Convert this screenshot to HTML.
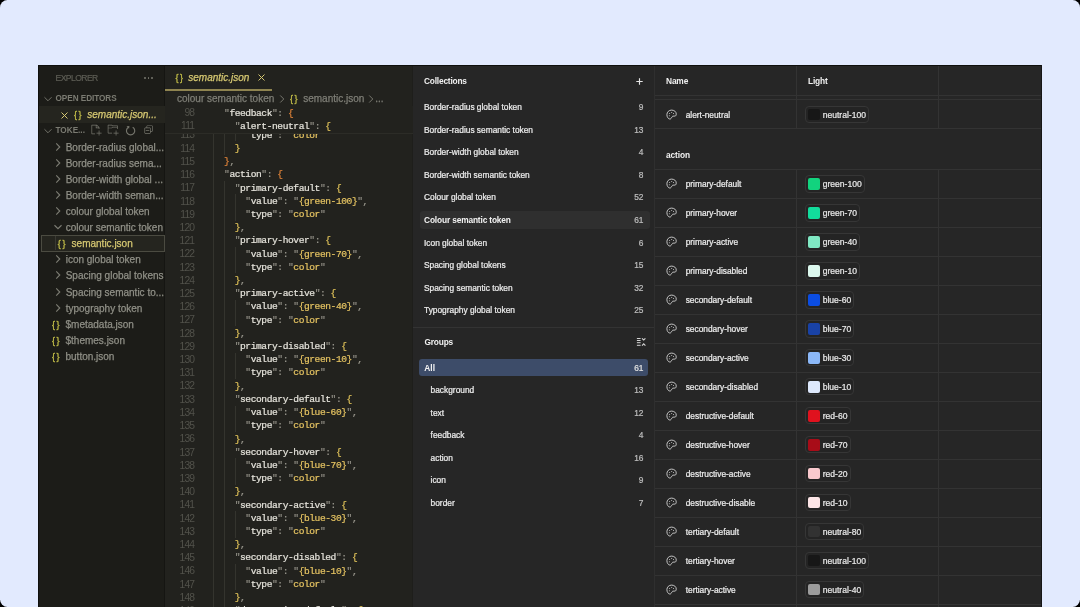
<!DOCTYPE html>
<html><head><meta charset="utf-8"><style>
html,body{margin:0;padding:0;}
body{width:1080px;height:607px;overflow:hidden;position:relative;background:#000;font-family:"Liberation Sans",sans-serif;}
.bgwrap{position:absolute;left:0;top:0;width:1080px;height:607px;background:#e2eafe;border-radius:7.5px;overflow:hidden;will-change:transform;}
.t{position:absolute;white-space:pre;}
.r{position:absolute;}
.m{font-family:"Liberation Mono",monospace;}
svg{position:absolute;overflow:visible;}
</style></head><body><div class="bgwrap">

<div class="r" style="left:38.00px;top:65.00px;width:127.00px;height:542.00px;background:#1c1c18;"></div>
<div class="r" style="left:165.00px;top:65.00px;width:248.00px;height:542.00px;background:#22221e;"></div>
<div class="r" style="left:413.00px;top:65.00px;width:241.00px;height:542.00px;background:#262626;"></div>
<div class="r" style="left:654.00px;top:65.00px;width:388.00px;height:542.00px;background:#262626;"></div>
<div class="r" style="left:164.00px;top:65.00px;width:1.00px;height:542.00px;background:#151512;"></div>
<div class="r" style="left:412.00px;top:65.00px;width:1.00px;height:542.00px;background:#1e1e1b;"></div>
<div class="t" style="left:55.50px;top:71.20px;line-height:14px;font-size:8.6px;color:#5d5d55;font-weight:normal;font-style:normal;letter-spacing:-0.58px;-webkit-text-stroke:0.2px currentColor;">EXPLORER</div>
<div class="r" style="left:144.20px;top:77.20px;width:1.50px;height:1.50px;background:#77776e;border-radius:1px;"></div>
<div class="r" style="left:147.70px;top:77.20px;width:1.50px;height:1.50px;background:#77776e;border-radius:1px;"></div>
<div class="r" style="left:151.20px;top:77.20px;width:1.50px;height:1.50px;background:#77776e;border-radius:1px;"></div>
<svg style="left:44px;top:95.2px" width="8" height="8" viewBox="0 0 10 10"><path d="M0.6 2.8 L5 7.2 L9.4 2.8" fill="none" stroke="#7b7b72" stroke-width="1.12"/></svg>
<div class="t" style="left:55.50px;top:92.00px;line-height:14px;font-size:8.2px;color:#7b7b72;font-weight:bold;font-style:normal;letter-spacing:-0.05px;">OPEN EDITORS</div>
<div class="r" style="left:38.00px;top:106.30px;width:127.00px;height:16.30px;background:#25251f;"></div>
<svg style="left:61px;top:111.5px" width="7" height="7" viewBox="0 0 7 7"><path d="M0.5 0.5 L6.5 6.5 M6.5 0.5 L0.5 6.5" stroke="#d6c872" stroke-width="1"/></svg>
<div class="t" style="left:74px;top:107.7px;line-height:14px;font-size:9px;color:#c3be48;font-weight:normal;letter-spacing:1.6px;-webkit-text-stroke:0.3px #c3be48">{}</div>
<div class="t" style="left:87.30px;top:107.70px;line-height:14px;font-size:10px;color:#d6c872;font-weight:normal;font-style:italic;letter-spacing:0px;-webkit-text-stroke:0.25px currentColor;">semantic.json...</div>
<svg style="left:44px;top:127.30000000000001px" width="8" height="8" viewBox="0 0 10 10"><path d="M0.6 2.8 L5 7.2 L9.4 2.8" fill="none" stroke="#7b7b72" stroke-width="1.12"/></svg>
<div class="t" style="left:55.50px;top:124.10px;line-height:14px;font-size:8.2px;color:#7b7b72;font-weight:bold;font-style:normal;letter-spacing:0px;">TOKE...</div>
<svg style="left:90px;top:124.2px" width="11.6" height="11.6" viewBox="0 0 16 16"><path d="M9.5 1.1l3.4 3.5.1.4v2h-1V6H8V2H3v11h4v1H2.5l-.5-.5v-12l.5-.5h6.7l.3.1zM9 2v3h2.9L9 2zm4 14h-1v-3H9v-1h3V9h1v3h3v1h-3v3z" fill="#75756c"/></svg>
<svg style="left:107px;top:124.2px" width="11.6" height="11.6" viewBox="0 0 16 16"><path d="M14.5 2H7.71l-.85-.85L6.51 1h-5l-.5.5v11l.5.5H7v-1H1.99V6h4.49l.35-.15.86-.86H14v1.5l-.001.51h1.011V2.5L14.5 2zm-.51 2h-6.5l-.35.15-.86.86H2v-3h4.29l.85.85.36.15H14l-.01.99zM13 16h-1v-3H9v-1h3V9h1v3h3v1h-3v3z" fill="#75756c"/></svg>
<svg style="left:122px;top:122px" width="18" height="18" viewBox="0 0 18 18"><path d="M10.68 5.16 A4.15 4.15 0 1 1 6.52 5.16" fill="none" stroke="#75756c" stroke-width="1.15"/><path d="M4.5 4.3 L7.4 3.9 L7.1 6.7 Z" fill="#75756c"/></svg>
<svg style="left:143px;top:124.2px" width="11.2" height="11.2" viewBox="0 0 16 16"><path d="M9 9H4v1h5V9z M5 3l1-1h7l1 1v7l-1 1h-2v2l-1 1H3l-1-1V6l1-1h2V3zm1 2h4l1 1v4h2V3H6v2zm4 1H3v7h7V6z" fill="#75756c"/></svg>
<svg style="left:53.5px;top:142.9px" width="8" height="8" viewBox="0 0 10 10"><path d="M2.8 0.6 L7.2 5 L2.8 9.4" fill="none" stroke="#7d7d74" stroke-width="1.38"/></svg>
<div class="t" style="left:65.70px;top:140.90px;line-height:14px;font-size:10px;color:#909087;font-weight:normal;font-style:normal;letter-spacing:0px;-webkit-text-stroke:0.25px currentColor;">Border-radius global...</div>
<svg style="left:53.5px;top:158.97px" width="8" height="8" viewBox="0 0 10 10"><path d="M2.8 0.6 L7.2 5 L2.8 9.4" fill="none" stroke="#7d7d74" stroke-width="1.38"/></svg>
<div class="t" style="left:65.70px;top:156.97px;line-height:14px;font-size:10px;color:#909087;font-weight:normal;font-style:normal;letter-spacing:0px;-webkit-text-stroke:0.25px currentColor;">Border-radius sema...</div>
<svg style="left:53.5px;top:175.04000000000002px" width="8" height="8" viewBox="0 0 10 10"><path d="M2.8 0.6 L7.2 5 L2.8 9.4" fill="none" stroke="#7d7d74" stroke-width="1.38"/></svg>
<div class="t" style="left:65.70px;top:173.04px;line-height:14px;font-size:10px;color:#909087;font-weight:normal;font-style:normal;letter-spacing:0px;-webkit-text-stroke:0.25px currentColor;">Border-width global ...</div>
<svg style="left:53.5px;top:191.11px" width="8" height="8" viewBox="0 0 10 10"><path d="M2.8 0.6 L7.2 5 L2.8 9.4" fill="none" stroke="#7d7d74" stroke-width="1.38"/></svg>
<div class="t" style="left:65.70px;top:189.11px;line-height:14px;font-size:10px;color:#909087;font-weight:normal;font-style:normal;letter-spacing:0px;-webkit-text-stroke:0.25px currentColor;">Border-width seman...</div>
<svg style="left:53.5px;top:207.18px" width="8" height="8" viewBox="0 0 10 10"><path d="M2.8 0.6 L7.2 5 L2.8 9.4" fill="none" stroke="#7d7d74" stroke-width="1.38"/></svg>
<div class="t" style="left:65.70px;top:205.18px;line-height:14px;font-size:10px;color:#909087;font-weight:normal;font-style:normal;letter-spacing:0px;-webkit-text-stroke:0.25px currentColor;">colour global token</div>
<svg style="left:54px;top:223.25px" width="8" height="8" viewBox="0 0 10 10"><path d="M0.6 2.8 L5 7.2 L9.4 2.8" fill="none" stroke="#7d7d74" stroke-width="1.38"/></svg>
<div class="t" style="left:65.70px;top:221.25px;line-height:14px;font-size:10px;color:#909087;font-weight:normal;font-style:normal;letter-spacing:0px;-webkit-text-stroke:0.25px currentColor;">colour semantic token</div>
<div class="r" style="left:40.50px;top:234.82px;width:124.00px;height:17.10px;background:#25251f;box-sizing:border-box;border:1px solid #4b4b41;"></div>
<div class="r" style="left:55.00px;top:236.02px;width:1.00px;height:14.40px;background:#3a3a33;"></div>
<div class="t" style="left:57.8px;top:237.32px;line-height:14px;font-size:9px;color:#c3be48;font-weight:normal;letter-spacing:1.6px;-webkit-text-stroke:0.3px #c3be48">{}</div>
<div class="t" style="left:71.60px;top:237.32px;line-height:14px;font-size:10px;color:#d6c872;font-weight:normal;font-style:normal;letter-spacing:0px;-webkit-text-stroke:0.25px currentColor;">semantic.json</div>
<svg style="left:53.5px;top:255.39px" width="8" height="8" viewBox="0 0 10 10"><path d="M2.8 0.6 L7.2 5 L2.8 9.4" fill="none" stroke="#7d7d74" stroke-width="1.38"/></svg>
<div class="t" style="left:65.70px;top:253.39px;line-height:14px;font-size:10px;color:#909087;font-weight:normal;font-style:normal;letter-spacing:0px;-webkit-text-stroke:0.25px currentColor;">icon global token</div>
<svg style="left:53.5px;top:271.46000000000004px" width="8" height="8" viewBox="0 0 10 10"><path d="M2.8 0.6 L7.2 5 L2.8 9.4" fill="none" stroke="#7d7d74" stroke-width="1.38"/></svg>
<div class="t" style="left:65.70px;top:269.46px;line-height:14px;font-size:10px;color:#909087;font-weight:normal;font-style:normal;letter-spacing:0px;-webkit-text-stroke:0.25px currentColor;">Spacing global tokens</div>
<svg style="left:53.5px;top:287.53px" width="8" height="8" viewBox="0 0 10 10"><path d="M2.8 0.6 L7.2 5 L2.8 9.4" fill="none" stroke="#7d7d74" stroke-width="1.38"/></svg>
<div class="t" style="left:65.70px;top:285.53px;line-height:14px;font-size:10px;color:#909087;font-weight:normal;font-style:normal;letter-spacing:0px;-webkit-text-stroke:0.25px currentColor;">Spacing semantic to...</div>
<svg style="left:53.5px;top:303.6px" width="8" height="8" viewBox="0 0 10 10"><path d="M2.8 0.6 L7.2 5 L2.8 9.4" fill="none" stroke="#7d7d74" stroke-width="1.38"/></svg>
<div class="t" style="left:65.70px;top:301.60px;line-height:14px;font-size:10px;color:#909087;font-weight:normal;font-style:normal;letter-spacing:0px;-webkit-text-stroke:0.25px currentColor;">typography token</div>
<div class="t" style="left:52px;top:317.67px;line-height:14px;font-size:9px;color:#c3be48;font-weight:normal;letter-spacing:1.6px;-webkit-text-stroke:0.3px #c3be48">{}</div>
<div class="t" style="left:65.50px;top:317.67px;line-height:14px;font-size:10px;color:#909087;font-weight:normal;font-style:normal;letter-spacing:0px;-webkit-text-stroke:0.25px currentColor;">$metadata.json</div>
<div class="t" style="left:52px;top:333.74px;line-height:14px;font-size:9px;color:#c3be48;font-weight:normal;letter-spacing:1.6px;-webkit-text-stroke:0.3px #c3be48">{}</div>
<div class="t" style="left:65.50px;top:333.74px;line-height:14px;font-size:10px;color:#909087;font-weight:normal;font-style:normal;letter-spacing:0px;-webkit-text-stroke:0.25px currentColor;">$themes.json</div>
<div class="t" style="left:52px;top:349.81px;line-height:14px;font-size:9px;color:#c3be48;font-weight:normal;letter-spacing:1.6px;-webkit-text-stroke:0.3px #c3be48">{}</div>
<div class="t" style="left:65.50px;top:349.81px;line-height:14px;font-size:10px;color:#909087;font-weight:normal;font-style:normal;letter-spacing:0px;-webkit-text-stroke:0.25px currentColor;">button.json</div>
<div class="t" style="left:175.4px;top:70.7px;line-height:14px;font-size:9px;color:#c3be48;font-weight:normal;letter-spacing:1.6px;-webkit-text-stroke:0.3px #c3be48">{}</div>
<div class="t" style="left:188.30px;top:70.70px;line-height:14px;font-size:10px;color:#d6c872;font-weight:normal;font-style:italic;letter-spacing:0px;-webkit-text-stroke:0.25px currentColor;">semantic.json</div>
<svg style="left:258px;top:74.3px" width="7" height="7" viewBox="0 0 7 7"><path d="M0.5 0.5 L6.5 6.5 M6.5 0.5 L0.5 6.5" stroke="#d6c872" stroke-width="1"/></svg>
<div class="r" style="left:165.00px;top:89.00px;width:106.50px;height:2.00px;background:#8f8450;"></div>
<div class="t" style="left:177.00px;top:91.90px;line-height:14px;font-size:10px;color:#7f7f77;font-weight:normal;font-style:normal;letter-spacing:0px;-webkit-text-stroke:0.25px currentColor;">colour semantic token</div>
<svg style="left:278px;top:94.9px" width="8" height="8" viewBox="0 0 10 10"><path d="M2.8 0.6 L7.2 5 L2.8 9.4" fill="none" stroke="#7f7f77" stroke-width="1.12"/></svg>
<div class="t" style="left:290px;top:91.9px;line-height:14px;font-size:9px;color:#c3be48;font-weight:normal;letter-spacing:1.6px;-webkit-text-stroke:0.3px #c3be48">{}</div>
<div class="t" style="left:303.20px;top:91.90px;line-height:14px;font-size:10px;color:#7f7f77;font-weight:normal;font-style:normal;letter-spacing:0px;-webkit-text-stroke:0.25px currentColor;">semantic.json</div>
<svg style="left:367px;top:94.9px" width="8" height="8" viewBox="0 0 10 10"><path d="M2.8 0.6 L7.2 5 L2.8 9.4" fill="none" stroke="#7f7f77" stroke-width="1.12"/></svg>
<div class="t" style="left:375.30px;top:91.90px;line-height:14px;font-size:10px;color:#7f7f77;font-weight:normal;font-style:normal;letter-spacing:0px;-webkit-text-stroke:0.25px currentColor;">...</div>
<div style="position:absolute;left:165px;top:106px;width:248px;height:501px;overflow:hidden">
<div style="position:absolute;left:-165px;top:-106px;width:1080px;height:607px">
<div class="r" style="left:213.40px;top:106.00px;width:1.00px;height:501.00px;background:#34342e;"></div>
<div class="r" style="left:224.06px;top:106.00px;width:1.00px;height:48.51px;background:#34342e;"></div>
<div class="r" style="left:224.06px;top:180.93px;width:1.00px;height:426.07px;background:#34342e;"></div>
<div class="r" style="left:234.72px;top:106.00px;width:1.00px;height:35.30px;background:#34342e;"></div>
<div class="r" style="left:234.72px;top:194.14px;width:1.00px;height:26.42px;background:#34342e;"></div>
<div class="r" style="left:234.72px;top:246.98px;width:1.00px;height:26.42px;background:#34342e;"></div>
<div class="r" style="left:234.72px;top:299.82px;width:1.00px;height:26.42px;background:#34342e;"></div>
<div class="r" style="left:234.72px;top:352.66px;width:1.00px;height:26.42px;background:#34342e;"></div>
<div class="r" style="left:234.72px;top:405.50px;width:1.00px;height:26.42px;background:#34342e;"></div>
<div class="r" style="left:234.72px;top:458.34px;width:1.00px;height:26.42px;background:#34342e;"></div>
<div class="r" style="left:234.72px;top:511.18px;width:1.00px;height:26.42px;background:#34342e;"></div>
<div class="r" style="left:234.72px;top:564.02px;width:1.00px;height:26.42px;background:#34342e;"></div>
<div class="t" style="right:885.80px;text-align:right;top:128.49px;line-height:13px;font-size:10.3px;color:#52524b;font-weight:normal;font-style:normal;letter-spacing:-0.85px;font-family:"Liberation Mono",monospace;">113</div>
<div class="t m" style="left:213.40px;top:128.69px;line-height:13px;font-size:9.6px;letter-spacing:-0.43px;-webkit-text-stroke:0.2px currentColor">      <span style="color:#8f8d84">&quot;</span><span style="color:#e6e4dc">type</span><span style="color:#8f8d84">&quot;</span><span style="color:#9a988e">: </span><span style="color:#8f8d84">&quot;</span><span style="color:#e6c462">color</span><span style="color:#8f8d84">&quot;</span></div>
<div class="t" style="right:885.80px;text-align:right;top:141.70px;line-height:13px;font-size:10.3px;color:#52524b;font-weight:normal;font-style:normal;letter-spacing:-0.85px;font-family:"Liberation Mono",monospace;">114</div>
<div class="t m" style="left:213.40px;top:141.90px;line-height:13px;font-size:9.6px;letter-spacing:-0.43px;-webkit-text-stroke:0.2px currentColor">    <span style="color:#e0c35a">}</span></div>
<div class="t" style="right:885.80px;text-align:right;top:154.91px;line-height:13px;font-size:10.3px;color:#52524b;font-weight:normal;font-style:normal;letter-spacing:-0.85px;font-family:"Liberation Mono",monospace;">115</div>
<div class="t m" style="left:213.40px;top:155.11px;line-height:13px;font-size:9.6px;letter-spacing:-0.43px;-webkit-text-stroke:0.2px currentColor">  <span style="color:#e0843a">}</span><span style="color:#9a988e">,</span></div>
<div class="t" style="right:885.80px;text-align:right;top:168.12px;line-height:13px;font-size:10.3px;color:#52524b;font-weight:normal;font-style:normal;letter-spacing:-0.85px;font-family:"Liberation Mono",monospace;">116</div>
<div class="t m" style="left:213.40px;top:168.32px;line-height:13px;font-size:9.6px;letter-spacing:-0.43px;-webkit-text-stroke:0.2px currentColor">  <span style="color:#8f8d84">&quot;</span><span style="color:#e6e4dc">action</span><span style="color:#8f8d84">&quot;</span><span style="color:#9a988e">: </span><span style="color:#e0843a">{</span></div>
<div class="t" style="right:885.80px;text-align:right;top:181.33px;line-height:13px;font-size:10.3px;color:#52524b;font-weight:normal;font-style:normal;letter-spacing:-0.85px;font-family:"Liberation Mono",monospace;">117</div>
<div class="t m" style="left:213.40px;top:181.53px;line-height:13px;font-size:9.6px;letter-spacing:-0.43px;-webkit-text-stroke:0.2px currentColor">    <span style="color:#8f8d84">&quot;</span><span style="color:#e6e4dc">primary-default</span><span style="color:#8f8d84">&quot;</span><span style="color:#9a988e">: </span><span style="color:#e0c35a">{</span></div>
<div class="t" style="right:885.80px;text-align:right;top:194.54px;line-height:13px;font-size:10.3px;color:#52524b;font-weight:normal;font-style:normal;letter-spacing:-0.85px;font-family:"Liberation Mono",monospace;">118</div>
<div class="t m" style="left:213.40px;top:194.74px;line-height:13px;font-size:9.6px;letter-spacing:-0.43px;-webkit-text-stroke:0.2px currentColor">      <span style="color:#8f8d84">&quot;</span><span style="color:#e6e4dc">value</span><span style="color:#8f8d84">&quot;</span><span style="color:#9a988e">: </span><span style="color:#8f8d84">&quot;</span><span style="color:#e6c462">{green-100}</span><span style="color:#8f8d84">&quot;</span><span style="color:#9a988e">,</span></div>
<div class="t" style="right:885.80px;text-align:right;top:207.75px;line-height:13px;font-size:10.3px;color:#52524b;font-weight:normal;font-style:normal;letter-spacing:-0.85px;font-family:"Liberation Mono",monospace;">119</div>
<div class="t m" style="left:213.40px;top:207.95px;line-height:13px;font-size:9.6px;letter-spacing:-0.43px;-webkit-text-stroke:0.2px currentColor">      <span style="color:#8f8d84">&quot;</span><span style="color:#e6e4dc">type</span><span style="color:#8f8d84">&quot;</span><span style="color:#9a988e">: </span><span style="color:#8f8d84">&quot;</span><span style="color:#e6c462">color</span><span style="color:#8f8d84">&quot;</span></div>
<div class="t" style="right:885.80px;text-align:right;top:220.96px;line-height:13px;font-size:10.3px;color:#52524b;font-weight:normal;font-style:normal;letter-spacing:-0.85px;font-family:"Liberation Mono",monospace;">120</div>
<div class="t m" style="left:213.40px;top:221.16px;line-height:13px;font-size:9.6px;letter-spacing:-0.43px;-webkit-text-stroke:0.2px currentColor">    <span style="color:#e0c35a">}</span><span style="color:#9a988e">,</span></div>
<div class="t" style="right:885.80px;text-align:right;top:234.17px;line-height:13px;font-size:10.3px;color:#52524b;font-weight:normal;font-style:normal;letter-spacing:-0.85px;font-family:"Liberation Mono",monospace;">121</div>
<div class="t m" style="left:213.40px;top:234.37px;line-height:13px;font-size:9.6px;letter-spacing:-0.43px;-webkit-text-stroke:0.2px currentColor">    <span style="color:#8f8d84">&quot;</span><span style="color:#e6e4dc">primary-hover</span><span style="color:#8f8d84">&quot;</span><span style="color:#9a988e">: </span><span style="color:#e0c35a">{</span></div>
<div class="t" style="right:885.80px;text-align:right;top:247.38px;line-height:13px;font-size:10.3px;color:#52524b;font-weight:normal;font-style:normal;letter-spacing:-0.85px;font-family:"Liberation Mono",monospace;">122</div>
<div class="t m" style="left:213.40px;top:247.58px;line-height:13px;font-size:9.6px;letter-spacing:-0.43px;-webkit-text-stroke:0.2px currentColor">      <span style="color:#8f8d84">&quot;</span><span style="color:#e6e4dc">value</span><span style="color:#8f8d84">&quot;</span><span style="color:#9a988e">: </span><span style="color:#8f8d84">&quot;</span><span style="color:#e6c462">{green-70}</span><span style="color:#8f8d84">&quot;</span><span style="color:#9a988e">,</span></div>
<div class="t" style="right:885.80px;text-align:right;top:260.59px;line-height:13px;font-size:10.3px;color:#52524b;font-weight:normal;font-style:normal;letter-spacing:-0.85px;font-family:"Liberation Mono",monospace;">123</div>
<div class="t m" style="left:213.40px;top:260.79px;line-height:13px;font-size:9.6px;letter-spacing:-0.43px;-webkit-text-stroke:0.2px currentColor">      <span style="color:#8f8d84">&quot;</span><span style="color:#e6e4dc">type</span><span style="color:#8f8d84">&quot;</span><span style="color:#9a988e">: </span><span style="color:#8f8d84">&quot;</span><span style="color:#e6c462">color</span><span style="color:#8f8d84">&quot;</span></div>
<div class="t" style="right:885.80px;text-align:right;top:273.80px;line-height:13px;font-size:10.3px;color:#52524b;font-weight:normal;font-style:normal;letter-spacing:-0.85px;font-family:"Liberation Mono",monospace;">124</div>
<div class="t m" style="left:213.40px;top:274.00px;line-height:13px;font-size:9.6px;letter-spacing:-0.43px;-webkit-text-stroke:0.2px currentColor">    <span style="color:#e0c35a">}</span><span style="color:#9a988e">,</span></div>
<div class="t" style="right:885.80px;text-align:right;top:287.01px;line-height:13px;font-size:10.3px;color:#52524b;font-weight:normal;font-style:normal;letter-spacing:-0.85px;font-family:"Liberation Mono",monospace;">125</div>
<div class="t m" style="left:213.40px;top:287.21px;line-height:13px;font-size:9.6px;letter-spacing:-0.43px;-webkit-text-stroke:0.2px currentColor">    <span style="color:#8f8d84">&quot;</span><span style="color:#e6e4dc">primary-active</span><span style="color:#8f8d84">&quot;</span><span style="color:#9a988e">: </span><span style="color:#e0c35a">{</span></div>
<div class="t" style="right:885.80px;text-align:right;top:300.22px;line-height:13px;font-size:10.3px;color:#52524b;font-weight:normal;font-style:normal;letter-spacing:-0.85px;font-family:"Liberation Mono",monospace;">126</div>
<div class="t m" style="left:213.40px;top:300.42px;line-height:13px;font-size:9.6px;letter-spacing:-0.43px;-webkit-text-stroke:0.2px currentColor">      <span style="color:#8f8d84">&quot;</span><span style="color:#e6e4dc">value</span><span style="color:#8f8d84">&quot;</span><span style="color:#9a988e">: </span><span style="color:#8f8d84">&quot;</span><span style="color:#e6c462">{green-40}</span><span style="color:#8f8d84">&quot;</span><span style="color:#9a988e">,</span></div>
<div class="t" style="right:885.80px;text-align:right;top:313.43px;line-height:13px;font-size:10.3px;color:#52524b;font-weight:normal;font-style:normal;letter-spacing:-0.85px;font-family:"Liberation Mono",monospace;">127</div>
<div class="t m" style="left:213.40px;top:313.63px;line-height:13px;font-size:9.6px;letter-spacing:-0.43px;-webkit-text-stroke:0.2px currentColor">      <span style="color:#8f8d84">&quot;</span><span style="color:#e6e4dc">type</span><span style="color:#8f8d84">&quot;</span><span style="color:#9a988e">: </span><span style="color:#8f8d84">&quot;</span><span style="color:#e6c462">color</span><span style="color:#8f8d84">&quot;</span></div>
<div class="t" style="right:885.80px;text-align:right;top:326.64px;line-height:13px;font-size:10.3px;color:#52524b;font-weight:normal;font-style:normal;letter-spacing:-0.85px;font-family:"Liberation Mono",monospace;">128</div>
<div class="t m" style="left:213.40px;top:326.84px;line-height:13px;font-size:9.6px;letter-spacing:-0.43px;-webkit-text-stroke:0.2px currentColor">    <span style="color:#e0c35a">}</span><span style="color:#9a988e">,</span></div>
<div class="t" style="right:885.80px;text-align:right;top:339.85px;line-height:13px;font-size:10.3px;color:#52524b;font-weight:normal;font-style:normal;letter-spacing:-0.85px;font-family:"Liberation Mono",monospace;">129</div>
<div class="t m" style="left:213.40px;top:340.05px;line-height:13px;font-size:9.6px;letter-spacing:-0.43px;-webkit-text-stroke:0.2px currentColor">    <span style="color:#8f8d84">&quot;</span><span style="color:#e6e4dc">primary-disabled</span><span style="color:#8f8d84">&quot;</span><span style="color:#9a988e">: </span><span style="color:#e0c35a">{</span></div>
<div class="t" style="right:885.80px;text-align:right;top:353.06px;line-height:13px;font-size:10.3px;color:#52524b;font-weight:normal;font-style:normal;letter-spacing:-0.85px;font-family:"Liberation Mono",monospace;">130</div>
<div class="t m" style="left:213.40px;top:353.26px;line-height:13px;font-size:9.6px;letter-spacing:-0.43px;-webkit-text-stroke:0.2px currentColor">      <span style="color:#8f8d84">&quot;</span><span style="color:#e6e4dc">value</span><span style="color:#8f8d84">&quot;</span><span style="color:#9a988e">: </span><span style="color:#8f8d84">&quot;</span><span style="color:#e6c462">{green-10}</span><span style="color:#8f8d84">&quot;</span><span style="color:#9a988e">,</span></div>
<div class="t" style="right:885.80px;text-align:right;top:366.27px;line-height:13px;font-size:10.3px;color:#52524b;font-weight:normal;font-style:normal;letter-spacing:-0.85px;font-family:"Liberation Mono",monospace;">131</div>
<div class="t m" style="left:213.40px;top:366.47px;line-height:13px;font-size:9.6px;letter-spacing:-0.43px;-webkit-text-stroke:0.2px currentColor">      <span style="color:#8f8d84">&quot;</span><span style="color:#e6e4dc">type</span><span style="color:#8f8d84">&quot;</span><span style="color:#9a988e">: </span><span style="color:#8f8d84">&quot;</span><span style="color:#e6c462">color</span><span style="color:#8f8d84">&quot;</span></div>
<div class="t" style="right:885.80px;text-align:right;top:379.48px;line-height:13px;font-size:10.3px;color:#52524b;font-weight:normal;font-style:normal;letter-spacing:-0.85px;font-family:"Liberation Mono",monospace;">132</div>
<div class="t m" style="left:213.40px;top:379.68px;line-height:13px;font-size:9.6px;letter-spacing:-0.43px;-webkit-text-stroke:0.2px currentColor">    <span style="color:#e0c35a">}</span><span style="color:#9a988e">,</span></div>
<div class="t" style="right:885.80px;text-align:right;top:392.69px;line-height:13px;font-size:10.3px;color:#52524b;font-weight:normal;font-style:normal;letter-spacing:-0.85px;font-family:"Liberation Mono",monospace;">133</div>
<div class="t m" style="left:213.40px;top:392.89px;line-height:13px;font-size:9.6px;letter-spacing:-0.43px;-webkit-text-stroke:0.2px currentColor">    <span style="color:#8f8d84">&quot;</span><span style="color:#e6e4dc">secondary-default</span><span style="color:#8f8d84">&quot;</span><span style="color:#9a988e">: </span><span style="color:#e0c35a">{</span></div>
<div class="t" style="right:885.80px;text-align:right;top:405.90px;line-height:13px;font-size:10.3px;color:#52524b;font-weight:normal;font-style:normal;letter-spacing:-0.85px;font-family:"Liberation Mono",monospace;">134</div>
<div class="t m" style="left:213.40px;top:406.10px;line-height:13px;font-size:9.6px;letter-spacing:-0.43px;-webkit-text-stroke:0.2px currentColor">      <span style="color:#8f8d84">&quot;</span><span style="color:#e6e4dc">value</span><span style="color:#8f8d84">&quot;</span><span style="color:#9a988e">: </span><span style="color:#8f8d84">&quot;</span><span style="color:#e6c462">{blue-60}</span><span style="color:#8f8d84">&quot;</span><span style="color:#9a988e">,</span></div>
<div class="t" style="right:885.80px;text-align:right;top:419.11px;line-height:13px;font-size:10.3px;color:#52524b;font-weight:normal;font-style:normal;letter-spacing:-0.85px;font-family:"Liberation Mono",monospace;">135</div>
<div class="t m" style="left:213.40px;top:419.31px;line-height:13px;font-size:9.6px;letter-spacing:-0.43px;-webkit-text-stroke:0.2px currentColor">      <span style="color:#8f8d84">&quot;</span><span style="color:#e6e4dc">type</span><span style="color:#8f8d84">&quot;</span><span style="color:#9a988e">: </span><span style="color:#8f8d84">&quot;</span><span style="color:#e6c462">color</span><span style="color:#8f8d84">&quot;</span></div>
<div class="t" style="right:885.80px;text-align:right;top:432.32px;line-height:13px;font-size:10.3px;color:#52524b;font-weight:normal;font-style:normal;letter-spacing:-0.85px;font-family:"Liberation Mono",monospace;">136</div>
<div class="t m" style="left:213.40px;top:432.52px;line-height:13px;font-size:9.6px;letter-spacing:-0.43px;-webkit-text-stroke:0.2px currentColor">    <span style="color:#e0c35a">}</span><span style="color:#9a988e">,</span></div>
<div class="t" style="right:885.80px;text-align:right;top:445.53px;line-height:13px;font-size:10.3px;color:#52524b;font-weight:normal;font-style:normal;letter-spacing:-0.85px;font-family:"Liberation Mono",monospace;">137</div>
<div class="t m" style="left:213.40px;top:445.73px;line-height:13px;font-size:9.6px;letter-spacing:-0.43px;-webkit-text-stroke:0.2px currentColor">    <span style="color:#8f8d84">&quot;</span><span style="color:#e6e4dc">secondary-hover</span><span style="color:#8f8d84">&quot;</span><span style="color:#9a988e">: </span><span style="color:#e0c35a">{</span></div>
<div class="t" style="right:885.80px;text-align:right;top:458.74px;line-height:13px;font-size:10.3px;color:#52524b;font-weight:normal;font-style:normal;letter-spacing:-0.85px;font-family:"Liberation Mono",monospace;">138</div>
<div class="t m" style="left:213.40px;top:458.94px;line-height:13px;font-size:9.6px;letter-spacing:-0.43px;-webkit-text-stroke:0.2px currentColor">      <span style="color:#8f8d84">&quot;</span><span style="color:#e6e4dc">value</span><span style="color:#8f8d84">&quot;</span><span style="color:#9a988e">: </span><span style="color:#8f8d84">&quot;</span><span style="color:#e6c462">{blue-70}</span><span style="color:#8f8d84">&quot;</span><span style="color:#9a988e">,</span></div>
<div class="t" style="right:885.80px;text-align:right;top:471.95px;line-height:13px;font-size:10.3px;color:#52524b;font-weight:normal;font-style:normal;letter-spacing:-0.85px;font-family:"Liberation Mono",monospace;">139</div>
<div class="t m" style="left:213.40px;top:472.15px;line-height:13px;font-size:9.6px;letter-spacing:-0.43px;-webkit-text-stroke:0.2px currentColor">      <span style="color:#8f8d84">&quot;</span><span style="color:#e6e4dc">type</span><span style="color:#8f8d84">&quot;</span><span style="color:#9a988e">: </span><span style="color:#8f8d84">&quot;</span><span style="color:#e6c462">color</span><span style="color:#8f8d84">&quot;</span></div>
<div class="t" style="right:885.80px;text-align:right;top:485.16px;line-height:13px;font-size:10.3px;color:#52524b;font-weight:normal;font-style:normal;letter-spacing:-0.85px;font-family:"Liberation Mono",monospace;">140</div>
<div class="t m" style="left:213.40px;top:485.36px;line-height:13px;font-size:9.6px;letter-spacing:-0.43px;-webkit-text-stroke:0.2px currentColor">    <span style="color:#e0c35a">}</span><span style="color:#9a988e">,</span></div>
<div class="t" style="right:885.80px;text-align:right;top:498.37px;line-height:13px;font-size:10.3px;color:#52524b;font-weight:normal;font-style:normal;letter-spacing:-0.85px;font-family:"Liberation Mono",monospace;">141</div>
<div class="t m" style="left:213.40px;top:498.57px;line-height:13px;font-size:9.6px;letter-spacing:-0.43px;-webkit-text-stroke:0.2px currentColor">    <span style="color:#8f8d84">&quot;</span><span style="color:#e6e4dc">secondary-active</span><span style="color:#8f8d84">&quot;</span><span style="color:#9a988e">: </span><span style="color:#e0c35a">{</span></div>
<div class="t" style="right:885.80px;text-align:right;top:511.58px;line-height:13px;font-size:10.3px;color:#52524b;font-weight:normal;font-style:normal;letter-spacing:-0.85px;font-family:"Liberation Mono",monospace;">142</div>
<div class="t m" style="left:213.40px;top:511.78px;line-height:13px;font-size:9.6px;letter-spacing:-0.43px;-webkit-text-stroke:0.2px currentColor">      <span style="color:#8f8d84">&quot;</span><span style="color:#e6e4dc">value</span><span style="color:#8f8d84">&quot;</span><span style="color:#9a988e">: </span><span style="color:#8f8d84">&quot;</span><span style="color:#e6c462">{blue-30}</span><span style="color:#8f8d84">&quot;</span><span style="color:#9a988e">,</span></div>
<div class="t" style="right:885.80px;text-align:right;top:524.79px;line-height:13px;font-size:10.3px;color:#52524b;font-weight:normal;font-style:normal;letter-spacing:-0.85px;font-family:"Liberation Mono",monospace;">143</div>
<div class="t m" style="left:213.40px;top:524.99px;line-height:13px;font-size:9.6px;letter-spacing:-0.43px;-webkit-text-stroke:0.2px currentColor">      <span style="color:#8f8d84">&quot;</span><span style="color:#e6e4dc">type</span><span style="color:#8f8d84">&quot;</span><span style="color:#9a988e">: </span><span style="color:#8f8d84">&quot;</span><span style="color:#e6c462">color</span><span style="color:#8f8d84">&quot;</span></div>
<div class="t" style="right:885.80px;text-align:right;top:538.00px;line-height:13px;font-size:10.3px;color:#52524b;font-weight:normal;font-style:normal;letter-spacing:-0.85px;font-family:"Liberation Mono",monospace;">144</div>
<div class="t m" style="left:213.40px;top:538.20px;line-height:13px;font-size:9.6px;letter-spacing:-0.43px;-webkit-text-stroke:0.2px currentColor">    <span style="color:#e0c35a">}</span><span style="color:#9a988e">,</span></div>
<div class="t" style="right:885.80px;text-align:right;top:551.21px;line-height:13px;font-size:10.3px;color:#52524b;font-weight:normal;font-style:normal;letter-spacing:-0.85px;font-family:"Liberation Mono",monospace;">145</div>
<div class="t m" style="left:213.40px;top:551.41px;line-height:13px;font-size:9.6px;letter-spacing:-0.43px;-webkit-text-stroke:0.2px currentColor">    <span style="color:#8f8d84">&quot;</span><span style="color:#e6e4dc">secondary-disabled</span><span style="color:#8f8d84">&quot;</span><span style="color:#9a988e">: </span><span style="color:#e0c35a">{</span></div>
<div class="t" style="right:885.80px;text-align:right;top:564.42px;line-height:13px;font-size:10.3px;color:#52524b;font-weight:normal;font-style:normal;letter-spacing:-0.85px;font-family:"Liberation Mono",monospace;">146</div>
<div class="t m" style="left:213.40px;top:564.62px;line-height:13px;font-size:9.6px;letter-spacing:-0.43px;-webkit-text-stroke:0.2px currentColor">      <span style="color:#8f8d84">&quot;</span><span style="color:#e6e4dc">value</span><span style="color:#8f8d84">&quot;</span><span style="color:#9a988e">: </span><span style="color:#8f8d84">&quot;</span><span style="color:#e6c462">{blue-10}</span><span style="color:#8f8d84">&quot;</span><span style="color:#9a988e">,</span></div>
<div class="t" style="right:885.80px;text-align:right;top:577.63px;line-height:13px;font-size:10.3px;color:#52524b;font-weight:normal;font-style:normal;letter-spacing:-0.85px;font-family:"Liberation Mono",monospace;">147</div>
<div class="t m" style="left:213.40px;top:577.83px;line-height:13px;font-size:9.6px;letter-spacing:-0.43px;-webkit-text-stroke:0.2px currentColor">      <span style="color:#8f8d84">&quot;</span><span style="color:#e6e4dc">type</span><span style="color:#8f8d84">&quot;</span><span style="color:#9a988e">: </span><span style="color:#8f8d84">&quot;</span><span style="color:#e6c462">color</span><span style="color:#8f8d84">&quot;</span></div>
<div class="t" style="right:885.80px;text-align:right;top:590.84px;line-height:13px;font-size:10.3px;color:#52524b;font-weight:normal;font-style:normal;letter-spacing:-0.85px;font-family:"Liberation Mono",monospace;">148</div>
<div class="t m" style="left:213.40px;top:591.04px;line-height:13px;font-size:9.6px;letter-spacing:-0.43px;-webkit-text-stroke:0.2px currentColor">    <span style="color:#e0c35a">}</span><span style="color:#9a988e">,</span></div>
<div class="t" style="right:885.80px;text-align:right;top:604.05px;line-height:13px;font-size:10.3px;color:#52524b;font-weight:normal;font-style:normal;letter-spacing:-0.85px;font-family:"Liberation Mono",monospace;">149</div>
<div class="t m" style="left:213.40px;top:604.25px;line-height:13px;font-size:9.6px;letter-spacing:-0.43px;-webkit-text-stroke:0.2px currentColor">    <span style="color:#8f8d84">&quot;</span><span style="color:#e6e4dc">destructive-default</span><span style="color:#8f8d84">&quot;</span><span style="color:#9a988e">: </span><span style="color:#e0c35a">{</span></div>
</div></div>
<div class="r" style="left:165.00px;top:106.00px;width:248.00px;height:26.80px;background:#22221e;"></div>
<div class="t" style="right:885.80px;text-align:right;top:106.30px;line-height:13px;font-size:10.3px;color:#52524b;font-weight:normal;font-style:normal;letter-spacing:-0.85px;font-family:"Liberation Mono",monospace;">98</div>
<div class="t m" style="left:213.40px;top:106.50px;line-height:13px;font-size:9.6px;letter-spacing:-0.43px;-webkit-text-stroke:0.2px currentColor">  <span style="color:#8f8d84">&quot;</span><span style="color:#e6e4dc">feedback</span><span style="color:#8f8d84">&quot;</span><span style="color:#9a988e">: </span><span style="color:#e0843a">{</span></div>
<div class="t" style="right:885.80px;text-align:right;top:119.40px;line-height:13px;font-size:10.3px;color:#52524b;font-weight:normal;font-style:normal;letter-spacing:-0.85px;font-family:"Liberation Mono",monospace;">111</div>
<div class="t m" style="left:213.40px;top:119.60px;line-height:13px;font-size:9.6px;letter-spacing:-0.43px;-webkit-text-stroke:0.2px currentColor">    <span style="color:#8f8d84">&quot;</span><span style="color:#e6e4dc">alert-neutral</span><span style="color:#8f8d84">&quot;</span><span style="color:#9a988e">: </span><span style="color:#e0c35a">{</span></div>
<div class="r" style="left:165.00px;top:132.80px;width:248.00px;height:1.00px;background:#2c2c27;"></div>
<div class="t" style="left:424.00px;top:74.30px;line-height:14px;font-size:8.35px;color:#f0f0f0;font-weight:bold;font-style:normal;letter-spacing:-0.2px;">Collections</div>
<svg style="left:635.8px;top:77.7px" width="7" height="7" viewBox="0 0 7 7"><path d="M3.5 0.3 V6.7 M0.3 3.5 H6.7" stroke="#e6e6e6" stroke-width="1.15"/></svg>
<div class="t" style="left:424.00px;top:100.10px;line-height:14px;font-size:8.35px;color:#ececec;font-weight:normal;font-style:normal;letter-spacing:0px;-webkit-text-stroke:0.22px currentColor;">Border-radius global token</div>
<div class="t" style="right:436.50px;text-align:right;top:100.10px;line-height:14px;font-size:8.35px;color:#bdbdbd;font-weight:normal;font-style:normal;letter-spacing:0px;-webkit-text-stroke:0.22px currentColor;">9</div>
<div class="t" style="left:424.00px;top:122.67px;line-height:14px;font-size:8.35px;color:#ececec;font-weight:normal;font-style:normal;letter-spacing:0px;-webkit-text-stroke:0.22px currentColor;">Border-radius semantic token</div>
<div class="t" style="right:436.50px;text-align:right;top:122.67px;line-height:14px;font-size:8.35px;color:#bdbdbd;font-weight:normal;font-style:normal;letter-spacing:0px;-webkit-text-stroke:0.22px currentColor;">13</div>
<div class="t" style="left:424.00px;top:145.24px;line-height:14px;font-size:8.35px;color:#ececec;font-weight:normal;font-style:normal;letter-spacing:0px;-webkit-text-stroke:0.22px currentColor;">Border-width global token</div>
<div class="t" style="right:436.50px;text-align:right;top:145.24px;line-height:14px;font-size:8.35px;color:#bdbdbd;font-weight:normal;font-style:normal;letter-spacing:0px;-webkit-text-stroke:0.22px currentColor;">4</div>
<div class="t" style="left:424.00px;top:167.81px;line-height:14px;font-size:8.35px;color:#ececec;font-weight:normal;font-style:normal;letter-spacing:0px;-webkit-text-stroke:0.22px currentColor;">Border-width semantic token</div>
<div class="t" style="right:436.50px;text-align:right;top:167.81px;line-height:14px;font-size:8.35px;color:#bdbdbd;font-weight:normal;font-style:normal;letter-spacing:0px;-webkit-text-stroke:0.22px currentColor;">8</div>
<div class="t" style="left:424.00px;top:190.38px;line-height:14px;font-size:8.35px;color:#ececec;font-weight:normal;font-style:normal;letter-spacing:0px;-webkit-text-stroke:0.22px currentColor;">Colour global token</div>
<div class="t" style="right:436.50px;text-align:right;top:190.38px;line-height:14px;font-size:8.35px;color:#bdbdbd;font-weight:normal;font-style:normal;letter-spacing:0px;-webkit-text-stroke:0.22px currentColor;">52</div>
<div class="r" style="left:420.40px;top:211.15px;width:229.20px;height:17.40px;background:#2f2f2f;border-radius:3px;"></div>
<div class="t" style="left:424.00px;top:212.95px;line-height:14px;font-size:8.35px;color:#f2f2f2;font-weight:bold;font-style:normal;letter-spacing:-0.15px;">Colour semantic token</div>
<div class="t" style="right:436.50px;text-align:right;top:212.95px;line-height:14px;font-size:8.35px;color:#bdbdbd;font-weight:normal;font-style:normal;letter-spacing:0px;-webkit-text-stroke:0.22px currentColor;">61</div>
<div class="t" style="left:424.00px;top:235.52px;line-height:14px;font-size:8.35px;color:#ececec;font-weight:normal;font-style:normal;letter-spacing:0px;-webkit-text-stroke:0.22px currentColor;">Icon global token</div>
<div class="t" style="right:436.50px;text-align:right;top:235.52px;line-height:14px;font-size:8.35px;color:#bdbdbd;font-weight:normal;font-style:normal;letter-spacing:0px;-webkit-text-stroke:0.22px currentColor;">6</div>
<div class="t" style="left:424.00px;top:258.09px;line-height:14px;font-size:8.35px;color:#ececec;font-weight:normal;font-style:normal;letter-spacing:0px;-webkit-text-stroke:0.22px currentColor;">Spacing global tokens</div>
<div class="t" style="right:436.50px;text-align:right;top:258.09px;line-height:14px;font-size:8.35px;color:#bdbdbd;font-weight:normal;font-style:normal;letter-spacing:0px;-webkit-text-stroke:0.22px currentColor;">15</div>
<div class="t" style="left:424.00px;top:280.66px;line-height:14px;font-size:8.35px;color:#ececec;font-weight:normal;font-style:normal;letter-spacing:0px;-webkit-text-stroke:0.22px currentColor;">Spacing semantic token</div>
<div class="t" style="right:436.50px;text-align:right;top:280.66px;line-height:14px;font-size:8.35px;color:#bdbdbd;font-weight:normal;font-style:normal;letter-spacing:0px;-webkit-text-stroke:0.22px currentColor;">32</div>
<div class="t" style="left:424.00px;top:303.23px;line-height:14px;font-size:8.35px;color:#ececec;font-weight:normal;font-style:normal;letter-spacing:0px;-webkit-text-stroke:0.22px currentColor;">Typography global token</div>
<div class="t" style="right:436.50px;text-align:right;top:303.23px;line-height:14px;font-size:8.35px;color:#bdbdbd;font-weight:normal;font-style:normal;letter-spacing:0px;-webkit-text-stroke:0.22px currentColor;">25</div>
<div class="r" style="left:413.00px;top:326.50px;width:241.00px;height:1.00px;background:#333333;"></div>
<div class="t" style="left:424.50px;top:335.30px;line-height:14px;font-size:8.35px;color:#f0f0f0;font-weight:bold;font-style:normal;letter-spacing:-0.2px;">Groups</div>
<svg style="left:636px;top:336px" width="10" height="11" viewBox="0 0 10 11"><path d="M0.9 2.5 H4.6 M0.9 4.5 H4.6 M0.9 6.7 H4.6 M0.9 9.3 H4.6" stroke="#d4d4d4" stroke-width="1"/><path d="M6 2.3 L7.7 4 L9.4 2.3 M6 9.6 L7.7 7.9 L9.4 9.6" fill="none" stroke="#d4d4d4" stroke-width="1.1"/></svg>
<div class="r" style="left:419.00px;top:359.20px;width:229.20px;height:16.90px;background:#3d4c69;border-radius:3px;"></div>
<div class="t" style="left:424.30px;top:360.60px;line-height:14px;font-size:8.35px;color:#f4f4f4;font-weight:bold;font-style:normal;letter-spacing:0px;">All</div>
<div class="t" style="right:436.50px;text-align:right;top:360.60px;line-height:14px;font-size:8.35px;color:#e0e0e0;font-weight:normal;font-style:normal;letter-spacing:0px;-webkit-text-stroke:0.22px currentColor;">61</div>
<div class="t" style="left:430.60px;top:383.20px;line-height:14px;font-size:8.35px;color:#ececec;font-weight:normal;font-style:normal;letter-spacing:0px;-webkit-text-stroke:0.22px currentColor;">background</div>
<div class="t" style="right:436.50px;text-align:right;top:383.20px;line-height:14px;font-size:8.35px;color:#bdbdbd;font-weight:normal;font-style:normal;letter-spacing:0px;-webkit-text-stroke:0.22px currentColor;">13</div>
<div class="t" style="left:430.60px;top:405.77px;line-height:14px;font-size:8.35px;color:#ececec;font-weight:normal;font-style:normal;letter-spacing:0px;-webkit-text-stroke:0.22px currentColor;">text</div>
<div class="t" style="right:436.50px;text-align:right;top:405.77px;line-height:14px;font-size:8.35px;color:#bdbdbd;font-weight:normal;font-style:normal;letter-spacing:0px;-webkit-text-stroke:0.22px currentColor;">12</div>
<div class="t" style="left:430.60px;top:428.34px;line-height:14px;font-size:8.35px;color:#ececec;font-weight:normal;font-style:normal;letter-spacing:0px;-webkit-text-stroke:0.22px currentColor;">feedback</div>
<div class="t" style="right:436.50px;text-align:right;top:428.34px;line-height:14px;font-size:8.35px;color:#bdbdbd;font-weight:normal;font-style:normal;letter-spacing:0px;-webkit-text-stroke:0.22px currentColor;">4</div>
<div class="t" style="left:430.60px;top:450.91px;line-height:14px;font-size:8.35px;color:#ececec;font-weight:normal;font-style:normal;letter-spacing:0px;-webkit-text-stroke:0.22px currentColor;">action</div>
<div class="t" style="right:436.50px;text-align:right;top:450.91px;line-height:14px;font-size:8.35px;color:#bdbdbd;font-weight:normal;font-style:normal;letter-spacing:0px;-webkit-text-stroke:0.22px currentColor;">16</div>
<div class="t" style="left:430.60px;top:473.48px;line-height:14px;font-size:8.35px;color:#ececec;font-weight:normal;font-style:normal;letter-spacing:0px;-webkit-text-stroke:0.22px currentColor;">icon</div>
<div class="t" style="right:436.50px;text-align:right;top:473.48px;line-height:14px;font-size:8.35px;color:#bdbdbd;font-weight:normal;font-style:normal;letter-spacing:0px;-webkit-text-stroke:0.22px currentColor;">9</div>
<div class="t" style="left:430.60px;top:496.05px;line-height:14px;font-size:8.35px;color:#ececec;font-weight:normal;font-style:normal;letter-spacing:0px;-webkit-text-stroke:0.22px currentColor;">border</div>
<div class="t" style="right:436.50px;text-align:right;top:496.05px;line-height:14px;font-size:8.35px;color:#bdbdbd;font-weight:normal;font-style:normal;letter-spacing:0px;-webkit-text-stroke:0.22px currentColor;">7</div>
<div class="r" style="left:654.00px;top:65.00px;width:1.00px;height:542.00px;background:#2f2f2f;"></div>
<div class="r" style="left:795.50px;top:65.00px;width:1.00px;height:64.00px;background:#333333;"></div>
<div class="r" style="left:937.50px;top:65.00px;width:1.00px;height:64.00px;background:#333333;"></div>
<div class="r" style="left:795.50px;top:169.60px;width:1.00px;height:438.00px;background:#333333;"></div>
<div class="r" style="left:937.50px;top:169.60px;width:1.00px;height:438.00px;background:#333333;"></div>
<div class="r" style="left:655.00px;top:95.25px;width:387.00px;height:1.00px;background:#333333;"></div>
<div class="r" style="left:655.00px;top:99.30px;width:387.00px;height:1.00px;background:#333333;"></div>
<div class="r" style="left:655.00px;top:128.45px;width:387.00px;height:1.00px;background:#333333;"></div>
<div class="r" style="left:655.00px;top:169.10px;width:387.00px;height:1.00px;background:#333333;"></div>
<div class="t" style="left:666.00px;top:74.40px;line-height:14px;font-size:8.35px;color:#f0f0f0;font-weight:bold;font-style:normal;letter-spacing:-0.15px;">Name</div>
<div class="t" style="left:808.00px;top:74.40px;line-height:14px;font-size:8.35px;color:#f0f0f0;font-weight:bold;font-style:normal;letter-spacing:-0.15px;">Light</div>
<svg style="left:666px;top:108.9px" width="11" height="11" viewBox="0 0 16 16"><path d="M8 1.6 C4.3 1.6 1.3 4.5 1.3 8.2 C1.3 11.8 3.5 14.6 5.6 14.6 C7.2 14.6 7.8 13.2 8.6 11.6 C9.2 10.6 10 10.3 11.5 10.3 L13 10.3 C14.3 10.3 14.9 8.8 14.9 7.2 C14.9 3.8 11.8 1.6 8 1.6 Z" fill="none" stroke="#cfcfcf" stroke-width="1.35"/><circle cx="4.9" cy="9.9" r="0.75" fill="#cfcfcf"/><circle cx="5.3" cy="6.4" r="0.75" fill="#cfcfcf"/><circle cx="8.3" cy="5.1" r="0.75" fill="#cfcfcf"/><circle cx="10.9" cy="6.5" r="0.75" fill="#cfcfcf"/></svg>
<div class="t" style="left:685.70px;top:107.50px;line-height:14px;font-size:8.35px;color:#ececec;font-weight:normal;font-style:normal;letter-spacing:0px;-webkit-text-stroke:0.22px currentColor;">alert-neutral</div>
<div class="r" style="left:805.20px;top:105.90px;width:63.95px;height:17.20px;background:#242424;box-sizing:border-box;border:1px solid #363636;border-radius:4px;"></div>
<div class="r" style="left:808.30px;top:108.80px;width:11.60px;height:11.40px;background:#171717;border-radius:2px;"></div>
<div class="t" style="left:822.70px;top:107.50px;line-height:14px;font-size:8.55px;color:#e8e8e8;font-weight:normal;font-style:normal;letter-spacing:0px;-webkit-text-stroke:0.22px currentColor;">neutral-100</div>
<div class="t" style="left:666.00px;top:148.20px;line-height:14px;font-size:8.35px;color:#f0f0f0;font-weight:bold;font-style:normal;letter-spacing:-0.1px;">action</div>
<svg style="left:666px;top:178.48499999999999px" width="11" height="11" viewBox="0 0 16 16"><path d="M8 1.6 C4.3 1.6 1.3 4.5 1.3 8.2 C1.3 11.8 3.5 14.6 5.6 14.6 C7.2 14.6 7.8 13.2 8.6 11.6 C9.2 10.6 10 10.3 11.5 10.3 L13 10.3 C14.3 10.3 14.9 8.8 14.9 7.2 C14.9 3.8 11.8 1.6 8 1.6 Z" fill="none" stroke="#cfcfcf" stroke-width="1.35"/><circle cx="4.9" cy="9.9" r="0.75" fill="#cfcfcf"/><circle cx="5.3" cy="6.4" r="0.75" fill="#cfcfcf"/><circle cx="8.3" cy="5.1" r="0.75" fill="#cfcfcf"/><circle cx="10.9" cy="6.5" r="0.75" fill="#cfcfcf"/></svg>
<div class="t" style="left:685.70px;top:177.08px;line-height:14px;font-size:8.35px;color:#ececec;font-weight:normal;font-style:normal;letter-spacing:0px;-webkit-text-stroke:0.22px currentColor;">primary-default</div>
<div class="r" style="left:805.20px;top:175.48px;width:59.67px;height:17.20px;background:#242424;box-sizing:border-box;border:1px solid #363636;border-radius:4px;"></div>
<div class="r" style="left:808.30px;top:178.38px;width:11.60px;height:11.40px;background:#12d37e;border-radius:2px;"></div>
<div class="t" style="left:822.70px;top:177.08px;line-height:14px;font-size:8.55px;color:#e8e8e8;font-weight:normal;font-style:normal;letter-spacing:0px;-webkit-text-stroke:0.22px currentColor;">green-100</div>
<div class="r" style="left:655.00px;top:198.07px;width:387.00px;height:1.00px;background:#333333;"></div>
<svg style="left:666px;top:207.455px" width="11" height="11" viewBox="0 0 16 16"><path d="M8 1.6 C4.3 1.6 1.3 4.5 1.3 8.2 C1.3 11.8 3.5 14.6 5.6 14.6 C7.2 14.6 7.8 13.2 8.6 11.6 C9.2 10.6 10 10.3 11.5 10.3 L13 10.3 C14.3 10.3 14.9 8.8 14.9 7.2 C14.9 3.8 11.8 1.6 8 1.6 Z" fill="none" stroke="#cfcfcf" stroke-width="1.35"/><circle cx="4.9" cy="9.9" r="0.75" fill="#cfcfcf"/><circle cx="5.3" cy="6.4" r="0.75" fill="#cfcfcf"/><circle cx="8.3" cy="5.1" r="0.75" fill="#cfcfcf"/><circle cx="10.9" cy="6.5" r="0.75" fill="#cfcfcf"/></svg>
<div class="t" style="left:685.70px;top:206.06px;line-height:14px;font-size:8.35px;color:#ececec;font-weight:normal;font-style:normal;letter-spacing:0px;-webkit-text-stroke:0.22px currentColor;">primary-hover</div>
<div class="r" style="left:805.20px;top:204.46px;width:54.92px;height:17.20px;background:#242424;box-sizing:border-box;border:1px solid #363636;border-radius:4px;"></div>
<div class="r" style="left:808.30px;top:207.36px;width:11.60px;height:11.40px;background:#12dc9c;border-radius:2px;"></div>
<div class="t" style="left:822.70px;top:206.06px;line-height:14px;font-size:8.55px;color:#e8e8e8;font-weight:normal;font-style:normal;letter-spacing:0px;-webkit-text-stroke:0.22px currentColor;">green-70</div>
<div class="r" style="left:655.00px;top:227.04px;width:387.00px;height:1.00px;background:#333333;"></div>
<svg style="left:666px;top:236.42499999999998px" width="11" height="11" viewBox="0 0 16 16"><path d="M8 1.6 C4.3 1.6 1.3 4.5 1.3 8.2 C1.3 11.8 3.5 14.6 5.6 14.6 C7.2 14.6 7.8 13.2 8.6 11.6 C9.2 10.6 10 10.3 11.5 10.3 L13 10.3 C14.3 10.3 14.9 8.8 14.9 7.2 C14.9 3.8 11.8 1.6 8 1.6 Z" fill="none" stroke="#cfcfcf" stroke-width="1.35"/><circle cx="4.9" cy="9.9" r="0.75" fill="#cfcfcf"/><circle cx="5.3" cy="6.4" r="0.75" fill="#cfcfcf"/><circle cx="8.3" cy="5.1" r="0.75" fill="#cfcfcf"/><circle cx="10.9" cy="6.5" r="0.75" fill="#cfcfcf"/></svg>
<div class="t" style="left:685.70px;top:235.02px;line-height:14px;font-size:8.35px;color:#ececec;font-weight:normal;font-style:normal;letter-spacing:0px;-webkit-text-stroke:0.22px currentColor;">primary-active</div>
<div class="r" style="left:805.20px;top:233.42px;width:54.92px;height:17.20px;background:#242424;box-sizing:border-box;border:1px solid #363636;border-radius:4px;"></div>
<div class="r" style="left:808.30px;top:236.32px;width:11.60px;height:11.40px;background:#80e9c4;border-radius:2px;"></div>
<div class="t" style="left:822.70px;top:235.02px;line-height:14px;font-size:8.55px;color:#e8e8e8;font-weight:normal;font-style:normal;letter-spacing:0px;-webkit-text-stroke:0.22px currentColor;">green-40</div>
<div class="r" style="left:655.00px;top:256.01px;width:387.00px;height:1.00px;background:#333333;"></div>
<svg style="left:666px;top:265.395px" width="11" height="11" viewBox="0 0 16 16"><path d="M8 1.6 C4.3 1.6 1.3 4.5 1.3 8.2 C1.3 11.8 3.5 14.6 5.6 14.6 C7.2 14.6 7.8 13.2 8.6 11.6 C9.2 10.6 10 10.3 11.5 10.3 L13 10.3 C14.3 10.3 14.9 8.8 14.9 7.2 C14.9 3.8 11.8 1.6 8 1.6 Z" fill="none" stroke="#cfcfcf" stroke-width="1.35"/><circle cx="4.9" cy="9.9" r="0.75" fill="#cfcfcf"/><circle cx="5.3" cy="6.4" r="0.75" fill="#cfcfcf"/><circle cx="8.3" cy="5.1" r="0.75" fill="#cfcfcf"/><circle cx="10.9" cy="6.5" r="0.75" fill="#cfcfcf"/></svg>
<div class="t" style="left:685.70px;top:264.00px;line-height:14px;font-size:8.35px;color:#ececec;font-weight:normal;font-style:normal;letter-spacing:0px;-webkit-text-stroke:0.22px currentColor;">primary-disabled</div>
<div class="r" style="left:805.20px;top:262.39px;width:54.92px;height:17.20px;background:#242424;box-sizing:border-box;border:1px solid #363636;border-radius:4px;"></div>
<div class="r" style="left:808.30px;top:265.30px;width:11.60px;height:11.40px;background:#dcf8ee;border-radius:2px;"></div>
<div class="t" style="left:822.70px;top:264.00px;line-height:14px;font-size:8.55px;color:#e8e8e8;font-weight:normal;font-style:normal;letter-spacing:0px;-webkit-text-stroke:0.22px currentColor;">green-10</div>
<div class="r" style="left:655.00px;top:284.98px;width:387.00px;height:1.00px;background:#333333;"></div>
<svg style="left:666px;top:294.365px" width="11" height="11" viewBox="0 0 16 16"><path d="M8 1.6 C4.3 1.6 1.3 4.5 1.3 8.2 C1.3 11.8 3.5 14.6 5.6 14.6 C7.2 14.6 7.8 13.2 8.6 11.6 C9.2 10.6 10 10.3 11.5 10.3 L13 10.3 C14.3 10.3 14.9 8.8 14.9 7.2 C14.9 3.8 11.8 1.6 8 1.6 Z" fill="none" stroke="#cfcfcf" stroke-width="1.35"/><circle cx="4.9" cy="9.9" r="0.75" fill="#cfcfcf"/><circle cx="5.3" cy="6.4" r="0.75" fill="#cfcfcf"/><circle cx="8.3" cy="5.1" r="0.75" fill="#cfcfcf"/><circle cx="10.9" cy="6.5" r="0.75" fill="#cfcfcf"/></svg>
<div class="t" style="left:685.70px;top:292.97px;line-height:14px;font-size:8.35px;color:#ececec;font-weight:normal;font-style:normal;letter-spacing:0px;-webkit-text-stroke:0.22px currentColor;">secondary-default</div>
<div class="r" style="left:805.20px;top:291.37px;width:49.22px;height:17.20px;background:#242424;box-sizing:border-box;border:1px solid #363636;border-radius:4px;"></div>
<div class="r" style="left:808.30px;top:294.27px;width:11.60px;height:11.40px;background:#0b4de2;border-radius:2px;"></div>
<div class="t" style="left:822.70px;top:292.97px;line-height:14px;font-size:8.55px;color:#e8e8e8;font-weight:normal;font-style:normal;letter-spacing:0px;-webkit-text-stroke:0.22px currentColor;">blue-60</div>
<div class="r" style="left:655.00px;top:313.95px;width:387.00px;height:1.00px;background:#333333;"></div>
<svg style="left:666px;top:323.335px" width="11" height="11" viewBox="0 0 16 16"><path d="M8 1.6 C4.3 1.6 1.3 4.5 1.3 8.2 C1.3 11.8 3.5 14.6 5.6 14.6 C7.2 14.6 7.8 13.2 8.6 11.6 C9.2 10.6 10 10.3 11.5 10.3 L13 10.3 C14.3 10.3 14.9 8.8 14.9 7.2 C14.9 3.8 11.8 1.6 8 1.6 Z" fill="none" stroke="#cfcfcf" stroke-width="1.35"/><circle cx="4.9" cy="9.9" r="0.75" fill="#cfcfcf"/><circle cx="5.3" cy="6.4" r="0.75" fill="#cfcfcf"/><circle cx="8.3" cy="5.1" r="0.75" fill="#cfcfcf"/><circle cx="10.9" cy="6.5" r="0.75" fill="#cfcfcf"/></svg>
<div class="t" style="left:685.70px;top:321.94px;line-height:14px;font-size:8.35px;color:#ececec;font-weight:normal;font-style:normal;letter-spacing:0px;-webkit-text-stroke:0.22px currentColor;">secondary-hover</div>
<div class="r" style="left:805.20px;top:320.33px;width:49.22px;height:17.20px;background:#242424;box-sizing:border-box;border:1px solid #363636;border-radius:4px;"></div>
<div class="r" style="left:808.30px;top:323.24px;width:11.60px;height:11.40px;background:#1942a6;border-radius:2px;"></div>
<div class="t" style="left:822.70px;top:321.94px;line-height:14px;font-size:8.55px;color:#e8e8e8;font-weight:normal;font-style:normal;letter-spacing:0px;-webkit-text-stroke:0.22px currentColor;">blue-70</div>
<div class="r" style="left:655.00px;top:342.92px;width:387.00px;height:1.00px;background:#333333;"></div>
<svg style="left:666px;top:352.30499999999995px" width="11" height="11" viewBox="0 0 16 16"><path d="M8 1.6 C4.3 1.6 1.3 4.5 1.3 8.2 C1.3 11.8 3.5 14.6 5.6 14.6 C7.2 14.6 7.8 13.2 8.6 11.6 C9.2 10.6 10 10.3 11.5 10.3 L13 10.3 C14.3 10.3 14.9 8.8 14.9 7.2 C14.9 3.8 11.8 1.6 8 1.6 Z" fill="none" stroke="#cfcfcf" stroke-width="1.35"/><circle cx="4.9" cy="9.9" r="0.75" fill="#cfcfcf"/><circle cx="5.3" cy="6.4" r="0.75" fill="#cfcfcf"/><circle cx="8.3" cy="5.1" r="0.75" fill="#cfcfcf"/><circle cx="10.9" cy="6.5" r="0.75" fill="#cfcfcf"/></svg>
<div class="t" style="left:685.70px;top:350.90px;line-height:14px;font-size:8.35px;color:#ececec;font-weight:normal;font-style:normal;letter-spacing:0px;-webkit-text-stroke:0.22px currentColor;">secondary-active</div>
<div class="r" style="left:805.20px;top:349.30px;width:49.22px;height:17.20px;background:#242424;box-sizing:border-box;border:1px solid #363636;border-radius:4px;"></div>
<div class="r" style="left:808.30px;top:352.20px;width:11.60px;height:11.40px;background:#8bb8f8;border-radius:2px;"></div>
<div class="t" style="left:822.70px;top:350.90px;line-height:14px;font-size:8.55px;color:#e8e8e8;font-weight:normal;font-style:normal;letter-spacing:0px;-webkit-text-stroke:0.22px currentColor;">blue-30</div>
<div class="r" style="left:655.00px;top:371.89px;width:387.00px;height:1.00px;background:#333333;"></div>
<svg style="left:666px;top:381.275px" width="11" height="11" viewBox="0 0 16 16"><path d="M8 1.6 C4.3 1.6 1.3 4.5 1.3 8.2 C1.3 11.8 3.5 14.6 5.6 14.6 C7.2 14.6 7.8 13.2 8.6 11.6 C9.2 10.6 10 10.3 11.5 10.3 L13 10.3 C14.3 10.3 14.9 8.8 14.9 7.2 C14.9 3.8 11.8 1.6 8 1.6 Z" fill="none" stroke="#cfcfcf" stroke-width="1.35"/><circle cx="4.9" cy="9.9" r="0.75" fill="#cfcfcf"/><circle cx="5.3" cy="6.4" r="0.75" fill="#cfcfcf"/><circle cx="8.3" cy="5.1" r="0.75" fill="#cfcfcf"/><circle cx="10.9" cy="6.5" r="0.75" fill="#cfcfcf"/></svg>
<div class="t" style="left:685.70px;top:379.88px;line-height:14px;font-size:8.35px;color:#ececec;font-weight:normal;font-style:normal;letter-spacing:0px;-webkit-text-stroke:0.22px currentColor;">secondary-disabled</div>
<div class="r" style="left:805.20px;top:378.27px;width:49.22px;height:17.20px;background:#242424;box-sizing:border-box;border:1px solid #363636;border-radius:4px;"></div>
<div class="r" style="left:808.30px;top:381.18px;width:11.60px;height:11.40px;background:#dde8fc;border-radius:2px;"></div>
<div class="t" style="left:822.70px;top:379.88px;line-height:14px;font-size:8.55px;color:#e8e8e8;font-weight:normal;font-style:normal;letter-spacing:0px;-webkit-text-stroke:0.22px currentColor;">blue-10</div>
<div class="r" style="left:655.00px;top:400.86px;width:387.00px;height:1.00px;background:#333333;"></div>
<svg style="left:666px;top:410.245px" width="11" height="11" viewBox="0 0 16 16"><path d="M8 1.6 C4.3 1.6 1.3 4.5 1.3 8.2 C1.3 11.8 3.5 14.6 5.6 14.6 C7.2 14.6 7.8 13.2 8.6 11.6 C9.2 10.6 10 10.3 11.5 10.3 L13 10.3 C14.3 10.3 14.9 8.8 14.9 7.2 C14.9 3.8 11.8 1.6 8 1.6 Z" fill="none" stroke="#cfcfcf" stroke-width="1.35"/><circle cx="4.9" cy="9.9" r="0.75" fill="#cfcfcf"/><circle cx="5.3" cy="6.4" r="0.75" fill="#cfcfcf"/><circle cx="8.3" cy="5.1" r="0.75" fill="#cfcfcf"/><circle cx="10.9" cy="6.5" r="0.75" fill="#cfcfcf"/></svg>
<div class="t" style="left:685.70px;top:408.85px;line-height:14px;font-size:8.35px;color:#ececec;font-weight:normal;font-style:normal;letter-spacing:0px;-webkit-text-stroke:0.22px currentColor;">destructive-default</div>
<div class="r" style="left:805.20px;top:407.25px;width:45.42px;height:17.20px;background:#242424;box-sizing:border-box;border:1px solid #363636;border-radius:4px;"></div>
<div class="r" style="left:808.30px;top:410.15px;width:11.60px;height:11.40px;background:#e0121e;border-radius:2px;"></div>
<div class="t" style="left:822.70px;top:408.85px;line-height:14px;font-size:8.55px;color:#e8e8e8;font-weight:normal;font-style:normal;letter-spacing:0px;-webkit-text-stroke:0.22px currentColor;">red-60</div>
<div class="r" style="left:655.00px;top:429.83px;width:387.00px;height:1.00px;background:#333333;"></div>
<svg style="left:666px;top:439.21500000000003px" width="11" height="11" viewBox="0 0 16 16"><path d="M8 1.6 C4.3 1.6 1.3 4.5 1.3 8.2 C1.3 11.8 3.5 14.6 5.6 14.6 C7.2 14.6 7.8 13.2 8.6 11.6 C9.2 10.6 10 10.3 11.5 10.3 L13 10.3 C14.3 10.3 14.9 8.8 14.9 7.2 C14.9 3.8 11.8 1.6 8 1.6 Z" fill="none" stroke="#cfcfcf" stroke-width="1.35"/><circle cx="4.9" cy="9.9" r="0.75" fill="#cfcfcf"/><circle cx="5.3" cy="6.4" r="0.75" fill="#cfcfcf"/><circle cx="8.3" cy="5.1" r="0.75" fill="#cfcfcf"/><circle cx="10.9" cy="6.5" r="0.75" fill="#cfcfcf"/></svg>
<div class="t" style="left:685.70px;top:437.82px;line-height:14px;font-size:8.35px;color:#ececec;font-weight:normal;font-style:normal;letter-spacing:0px;-webkit-text-stroke:0.22px currentColor;">destructive-hover</div>
<div class="r" style="left:805.20px;top:436.22px;width:45.42px;height:17.20px;background:#242424;box-sizing:border-box;border:1px solid #363636;border-radius:4px;"></div>
<div class="r" style="left:808.30px;top:439.12px;width:11.60px;height:11.40px;background:#a80c18;border-radius:2px;"></div>
<div class="t" style="left:822.70px;top:437.82px;line-height:14px;font-size:8.55px;color:#e8e8e8;font-weight:normal;font-style:normal;letter-spacing:0px;-webkit-text-stroke:0.22px currentColor;">red-70</div>
<div class="r" style="left:655.00px;top:458.80px;width:387.00px;height:1.00px;background:#333333;"></div>
<svg style="left:666px;top:468.18499999999995px" width="11" height="11" viewBox="0 0 16 16"><path d="M8 1.6 C4.3 1.6 1.3 4.5 1.3 8.2 C1.3 11.8 3.5 14.6 5.6 14.6 C7.2 14.6 7.8 13.2 8.6 11.6 C9.2 10.6 10 10.3 11.5 10.3 L13 10.3 C14.3 10.3 14.9 8.8 14.9 7.2 C14.9 3.8 11.8 1.6 8 1.6 Z" fill="none" stroke="#cfcfcf" stroke-width="1.35"/><circle cx="4.9" cy="9.9" r="0.75" fill="#cfcfcf"/><circle cx="5.3" cy="6.4" r="0.75" fill="#cfcfcf"/><circle cx="8.3" cy="5.1" r="0.75" fill="#cfcfcf"/><circle cx="10.9" cy="6.5" r="0.75" fill="#cfcfcf"/></svg>
<div class="t" style="left:685.70px;top:466.78px;line-height:14px;font-size:8.35px;color:#ececec;font-weight:normal;font-style:normal;letter-spacing:0px;-webkit-text-stroke:0.22px currentColor;">destructive-active</div>
<div class="r" style="left:805.20px;top:465.18px;width:45.42px;height:17.20px;background:#242424;box-sizing:border-box;border:1px solid #363636;border-radius:4px;"></div>
<div class="r" style="left:808.30px;top:468.08px;width:11.60px;height:11.40px;background:#f9c9cd;border-radius:2px;"></div>
<div class="t" style="left:822.70px;top:466.78px;line-height:14px;font-size:8.55px;color:#e8e8e8;font-weight:normal;font-style:normal;letter-spacing:0px;-webkit-text-stroke:0.22px currentColor;">red-20</div>
<div class="r" style="left:655.00px;top:487.77px;width:387.00px;height:1.00px;background:#333333;"></div>
<svg style="left:666px;top:497.155px" width="11" height="11" viewBox="0 0 16 16"><path d="M8 1.6 C4.3 1.6 1.3 4.5 1.3 8.2 C1.3 11.8 3.5 14.6 5.6 14.6 C7.2 14.6 7.8 13.2 8.6 11.6 C9.2 10.6 10 10.3 11.5 10.3 L13 10.3 C14.3 10.3 14.9 8.8 14.9 7.2 C14.9 3.8 11.8 1.6 8 1.6 Z" fill="none" stroke="#cfcfcf" stroke-width="1.35"/><circle cx="4.9" cy="9.9" r="0.75" fill="#cfcfcf"/><circle cx="5.3" cy="6.4" r="0.75" fill="#cfcfcf"/><circle cx="8.3" cy="5.1" r="0.75" fill="#cfcfcf"/><circle cx="10.9" cy="6.5" r="0.75" fill="#cfcfcf"/></svg>
<div class="t" style="left:685.70px;top:495.75px;line-height:14px;font-size:8.35px;color:#ececec;font-weight:normal;font-style:normal;letter-spacing:0px;-webkit-text-stroke:0.22px currentColor;">destructive-disable</div>
<div class="r" style="left:805.20px;top:494.15px;width:45.42px;height:17.20px;background:#242424;box-sizing:border-box;border:1px solid #363636;border-radius:4px;"></div>
<div class="r" style="left:808.30px;top:497.06px;width:11.60px;height:11.40px;background:#fde5e7;border-radius:2px;"></div>
<div class="t" style="left:822.70px;top:495.75px;line-height:14px;font-size:8.55px;color:#e8e8e8;font-weight:normal;font-style:normal;letter-spacing:0px;-webkit-text-stroke:0.22px currentColor;">red-10</div>
<div class="r" style="left:655.00px;top:516.74px;width:387.00px;height:1.00px;background:#333333;"></div>
<svg style="left:666px;top:526.125px" width="11" height="11" viewBox="0 0 16 16"><path d="M8 1.6 C4.3 1.6 1.3 4.5 1.3 8.2 C1.3 11.8 3.5 14.6 5.6 14.6 C7.2 14.6 7.8 13.2 8.6 11.6 C9.2 10.6 10 10.3 11.5 10.3 L13 10.3 C14.3 10.3 14.9 8.8 14.9 7.2 C14.9 3.8 11.8 1.6 8 1.6 Z" fill="none" stroke="#cfcfcf" stroke-width="1.35"/><circle cx="4.9" cy="9.9" r="0.75" fill="#cfcfcf"/><circle cx="5.3" cy="6.4" r="0.75" fill="#cfcfcf"/><circle cx="8.3" cy="5.1" r="0.75" fill="#cfcfcf"/><circle cx="10.9" cy="6.5" r="0.75" fill="#cfcfcf"/></svg>
<div class="t" style="left:685.70px;top:524.73px;line-height:14px;font-size:8.35px;color:#ececec;font-weight:normal;font-style:normal;letter-spacing:0px;-webkit-text-stroke:0.22px currentColor;">tertiary-default</div>
<div class="r" style="left:805.20px;top:523.12px;width:59.20px;height:17.20px;background:#242424;box-sizing:border-box;border:1px solid #363636;border-radius:4px;"></div>
<div class="r" style="left:808.30px;top:526.02px;width:11.60px;height:11.40px;background:#323232;border-radius:2px;"></div>
<div class="t" style="left:822.70px;top:524.73px;line-height:14px;font-size:8.55px;color:#e8e8e8;font-weight:normal;font-style:normal;letter-spacing:0px;-webkit-text-stroke:0.22px currentColor;">neutral-80</div>
<div class="r" style="left:655.00px;top:545.71px;width:387.00px;height:1.00px;background:#333333;"></div>
<svg style="left:666px;top:555.095px" width="11" height="11" viewBox="0 0 16 16"><path d="M8 1.6 C4.3 1.6 1.3 4.5 1.3 8.2 C1.3 11.8 3.5 14.6 5.6 14.6 C7.2 14.6 7.8 13.2 8.6 11.6 C9.2 10.6 10 10.3 11.5 10.3 L13 10.3 C14.3 10.3 14.9 8.8 14.9 7.2 C14.9 3.8 11.8 1.6 8 1.6 Z" fill="none" stroke="#cfcfcf" stroke-width="1.35"/><circle cx="4.9" cy="9.9" r="0.75" fill="#cfcfcf"/><circle cx="5.3" cy="6.4" r="0.75" fill="#cfcfcf"/><circle cx="8.3" cy="5.1" r="0.75" fill="#cfcfcf"/><circle cx="10.9" cy="6.5" r="0.75" fill="#cfcfcf"/></svg>
<div class="t" style="left:685.70px;top:553.70px;line-height:14px;font-size:8.35px;color:#ececec;font-weight:normal;font-style:normal;letter-spacing:0px;-webkit-text-stroke:0.22px currentColor;">tertiary-hover</div>
<div class="r" style="left:805.20px;top:552.10px;width:63.95px;height:17.20px;background:#242424;box-sizing:border-box;border:1px solid #363636;border-radius:4px;"></div>
<div class="r" style="left:808.30px;top:555.00px;width:11.60px;height:11.40px;background:#171717;border-radius:2px;"></div>
<div class="t" style="left:822.70px;top:553.70px;line-height:14px;font-size:8.55px;color:#e8e8e8;font-weight:normal;font-style:normal;letter-spacing:0px;-webkit-text-stroke:0.22px currentColor;">neutral-100</div>
<div class="r" style="left:655.00px;top:574.68px;width:387.00px;height:1.00px;background:#333333;"></div>
<svg style="left:666px;top:584.0649999999999px" width="11" height="11" viewBox="0 0 16 16"><path d="M8 1.6 C4.3 1.6 1.3 4.5 1.3 8.2 C1.3 11.8 3.5 14.6 5.6 14.6 C7.2 14.6 7.8 13.2 8.6 11.6 C9.2 10.6 10 10.3 11.5 10.3 L13 10.3 C14.3 10.3 14.9 8.8 14.9 7.2 C14.9 3.8 11.8 1.6 8 1.6 Z" fill="none" stroke="#cfcfcf" stroke-width="1.35"/><circle cx="4.9" cy="9.9" r="0.75" fill="#cfcfcf"/><circle cx="5.3" cy="6.4" r="0.75" fill="#cfcfcf"/><circle cx="8.3" cy="5.1" r="0.75" fill="#cfcfcf"/><circle cx="10.9" cy="6.5" r="0.75" fill="#cfcfcf"/></svg>
<div class="t" style="left:685.70px;top:582.66px;line-height:14px;font-size:8.35px;color:#ececec;font-weight:normal;font-style:normal;letter-spacing:0px;-webkit-text-stroke:0.22px currentColor;">tertiary-active</div>
<div class="r" style="left:805.20px;top:581.06px;width:59.20px;height:17.20px;background:#242424;box-sizing:border-box;border:1px solid #363636;border-radius:4px;"></div>
<div class="r" style="left:808.30px;top:583.96px;width:11.60px;height:11.40px;background:#9c9c9c;border-radius:2px;"></div>
<div class="t" style="left:822.70px;top:582.66px;line-height:14px;font-size:8.55px;color:#e8e8e8;font-weight:normal;font-style:normal;letter-spacing:0px;-webkit-text-stroke:0.22px currentColor;">neutral-40</div>
<div class="r" style="left:655.00px;top:603.65px;width:387.00px;height:1.00px;background:#333333;"></div>
<div class="r" style="left:38.00px;top:65.00px;width:1.00px;height:542.00px;background:#0f0f0d;"></div>
<div class="r" style="left:38.00px;top:65.00px;width:1004.00px;height:1.00px;background:#0f0f0d;"></div>
<div class="r" style="left:1041.00px;top:65.00px;width:1.00px;height:542.00px;background:#161616;"></div>
</div></body></html>
